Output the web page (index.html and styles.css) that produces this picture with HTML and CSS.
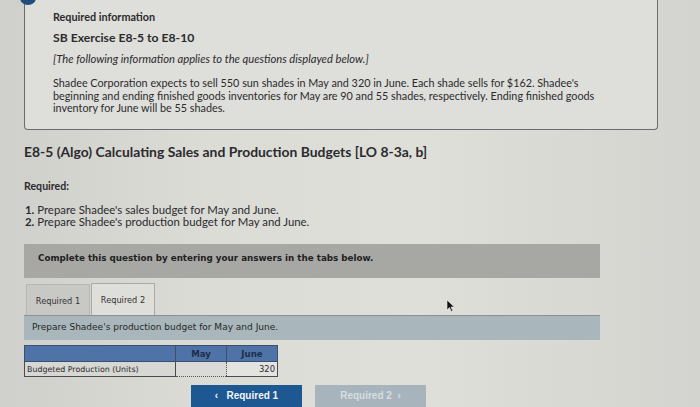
FILE: index.html
```html
<html>
<head>
  <title>E8-5 (Algo)</title>
  <link rel="stylesheet" href="styles.css">
</head>
<body>
  <section class="page">
    <!-- shared info box -->
    <div class="info">
      <span class="dot"></span>
      <h3 class="info-label">Required information</h3>
      <h2 class="info-title">SB Exercise E8-5 to E8-10</h2>
      <p class="info-note">[The following information applies to the questions displayed below.]</p>
      <p class="info-text">Shadee Corporation expects to sell 550 sun shades in May and 320 in June. Each shade sells for $162. Shadee's beginning and ending finished goods inventories for May are 90 and 55 shades, respectively. Ending finished goods inventory for June will be 55 shades.</p>
    </div>

    <h1 class="question">E8-5 (Algo) Calculating Sales and Production Budgets [LO 8-3a, b]</h1>
    <p class="req-label">Required:</p>
    <ol class="req-list">
      <li><b>1.</b> Prepare Shadee's sales budget for May and June.</li>
      <li><b>2.</b> Prepare Shadee's production budget for May and June.</li>
    </ol>

    <div class="banner">Complete this question by entering your answers in the tabs below.</div>

    <div class="tabs">
      <div class="tab">Required 1</div>
      <div class="tab active">Required 2</div>
      <svg class="cursor" width="9" height="13" viewBox="0 0 9 13"><path d="M1 1 L1 11 L3.5 8.6 L5.3 12.4 L6.8 11.7 L5 8 L8.3 8 Z" fill="#111" stroke="#eee" stroke-width="0.6"/></svg>
    </div>
    <div class="prompt">Prepare Shadee's production budget for May and June.</div>

    <table class="budget">
      <tr class="head">
        <th class="label"></th>
        <th>May</th>
        <th>June</th>
      </tr>
      <tr>
        <td class="label">Budgeted Production (Units)</td>
        <td class="input"></td>
        <td class="value">320</td>
      </tr>
    </table>

    <div class="nav">
      <div class="btn prev">&lsaquo;&nbsp;&nbsp; Required 1</div>
      <div class="btn next">Required 2 &nbsp;&rsaquo;</div>
    </div>
  </section>
</body>
</html>
```

FILE: styles.css
```css
body {
  margin: 0;
  height: 407px;
  overflow: hidden;
  background: linear-gradient(90deg, #cfcfcb 0%, #dcdcd7 30%, #dfdfda 60%, #d3d3cf 100%);
  font-family: Lato, "Open Sans", sans-serif;
  color: #2b2b2e;
}
.page {
  padding-left: 24px;
  width: 634px;
}
.info {
  position: relative;
  height: 130px;
  box-sizing: border-box;
  border: 1px solid #6c6c6e;
  border-top: none;
  border-radius: 0 0 4px 4px;
  padding: 10px 28px 0 28px;
  background: #dededa;
}
.dot {
  position: absolute;
  left: -5px;
  top: -9px;
  width: 16px;
  height: 14px;
  border-radius: 50%;
  background: #1f4e7c;
}
.info-label {
  margin: 0;
  font-size: 10.8px;
  font-weight: bold;
  line-height: 14px;
}
.info-title {
  margin: 6px 0 0 0;
  font-size: 12.2px;
  font-weight: bold;
  line-height: 16px;
}
.info-note {
  margin: 6px 0 0 0;
  font-size: 11.2px;
  font-style: italic;
  line-height: 14px;
}
.info-text {
  margin: 11px 0 0 0;
  font-size: 10.8px;
  line-height: 12.5px;
  width: 550px;
}
.question {
  margin: 14px 0 0 0;
  font-size: 13.9px;
  font-weight: bold;
  line-height: 16px;
}
.req-label {
  margin: 19px 0 0 0;
  font-size: 10.6px;
  font-weight: bold;
  line-height: 14px;
}
.req-list {
  margin: 11px 0 0 1px;
  padding: 0;
  list-style: none;
  font-size: 11.4px;
  line-height: 11.5px;
}
.banner {
  margin-top: 17px;
  width: 576px;
  height: 34px;
  box-sizing: border-box;
  padding: 9px 14px;
  background: #a7a7a4;
  font-family: "DejaVu Sans", sans-serif;
  font-size: 8.75px;
  font-weight: bold;
  color: #1e1e1e;
}
.tabs {
  position: relative;
  display: flex;
  align-items: flex-end;
  margin-top: 6px;
  width: 576px;
  height: 32px;
  padding-left: 2px;
  box-sizing: border-box;
  border-bottom: 1px solid #8d8f90;
}
.tab {
  width: 64px;
  height: 31px;
  box-sizing: border-box;
  margin-right: 1px;
  padding-top: 11px;
  text-align: center;
  border: 1px solid #b7b7b4;
  border-bottom: none;
  background: #c8c8c5;
  font-family: "DejaVu Sans", sans-serif;
  font-size: 8.2px;
  color: #333;
}
.tab.active {
  height: 32px;
  background: #dededa;
  border-color: #a9aaa8;
}
.cursor {
  position: absolute;
  left: 422px;
  top: 15px;
}
.prompt {
  width: 576px;
  height: 24px;
  box-sizing: border-box;
  padding: 6px 8px;
  background: #a9b7bc;
  font-family: "DejaVu Sans", sans-serif;
  font-size: 9px;
  color: #262626;
}
.budget {
  margin-top: 5px;
  border-collapse: collapse;
  font-family: "DejaVu Sans", sans-serif;
  font-size: 7.9px;
}
.budget th {
  height: 16px;
  padding: 0;
  width: 50px;
  background: #4f73a6;
  color: #1d2e4a;
  border: 1px solid #3b4f6e;
  font-size: 8.6px;
  font-weight: bold;
  vertical-align: middle;
}
.budget th.label {
  width: 150px;
}
.budget td {
  height: 15px;
  padding: 0 2px;
  border: 1px solid #4b4b4b;
  background: #d7d7d3;
}
.budget td.input {
  border: 1px dotted #555;
  background: #dadad6;
}
.budget td.value {
  text-align: right;
  background: #e3e3df;
  border-left: 1px dotted #555;
  font-size: 8.4px;
}
.nav {
  display: flex;
  gap: 13px;
  margin: 8px 0 0 167px;
}
.btn {
  width: 111px;
  height: 23px;
  box-sizing: border-box;
  padding-top: 5px;
  text-align: center;
  font-family: "Liberation Sans", Arial, sans-serif;
  font-size: 10px;
  font-weight: bold;
}
.btn.prev {
  background: #1d5892;
  color: #f2f4f7;
}
.btn.next {
  background: #a8b4bc;
  color: #d6dde2;
}
```
